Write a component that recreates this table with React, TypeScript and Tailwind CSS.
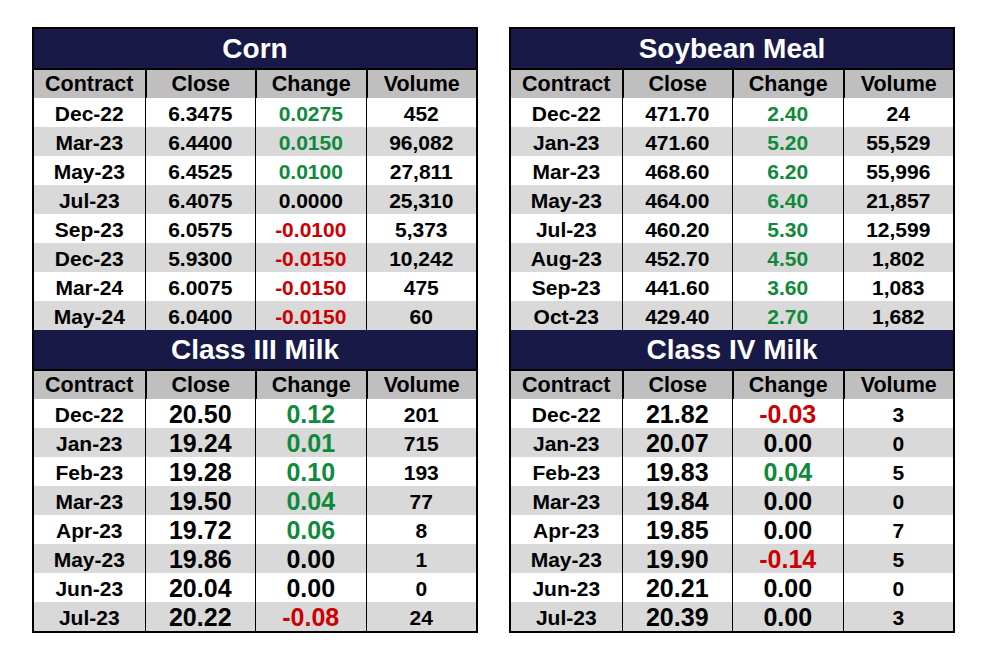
import React from 'react';

type Row = [string, string, string, string];

const GREEN = 'text-[#0f8a3c]';
const RED = 'text-[#cc0000]';

const corn: Row[] = [
  ['Dec-22', '6.3475', '0.0275', '452'],
  ['Mar-23', '6.4400', '0.0150', '96,082'],
  ['May-23', '6.4525', '0.0100', '27,811'],
  ['Jul-23', '6.4075', '0.0000', '25,310'],
  ['Sep-23', '6.0575', '-0.0100', '5,373'],
  ['Dec-23', '5.9300', '-0.0150', '10,242'],
  ['Mar-24', '6.0075', '-0.0150', '475'],
  ['May-24', '6.0400', '-0.0150', '60'],
];

const soyMeal: Row[] = [
  ['Dec-22', '471.70', '2.40', '24'],
  ['Jan-23', '471.60', '5.20', '55,529'],
  ['Mar-23', '468.60', '6.20', '55,996'],
  ['May-23', '464.00', '6.40', '21,857'],
  ['Jul-23', '460.20', '5.30', '12,599'],
  ['Aug-23', '452.70', '4.50', '1,802'],
  ['Sep-23', '441.60', '3.60', '1,083'],
  ['Oct-23', '429.40', '2.70', '1,682'],
];

const classIII: Row[] = [
  ['Dec-22', '20.50', '0.12', '201'],
  ['Jan-23', '19.24', '0.01', '715'],
  ['Feb-23', '19.28', '0.10', '193'],
  ['Mar-23', '19.50', '0.04', '77'],
  ['Apr-23', '19.72', '0.06', '8'],
  ['May-23', '19.86', '0.00', '1'],
  ['Jun-23', '20.04', '0.00', '0'],
  ['Jul-23', '20.22', '-0.08', '24'],
];

const classIV: Row[] = [
  ['Dec-22', '21.82', '-0.03', '3'],
  ['Jan-23', '20.07', '0.00', '0'],
  ['Feb-23', '19.83', '0.04', '5'],
  ['Mar-23', '19.84', '0.00', '0'],
  ['Apr-23', '19.85', '0.00', '7'],
  ['May-23', '19.90', '-0.14', '5'],
  ['Jun-23', '20.21', '0.00', '0'],
  ['Jul-23', '20.39', '0.00', '3'],
];

function changeColor(v: string) {
  const n = parseFloat(v);
  if (n > 0) return GREEN;
  if (n < 0) return RED;
  return 'text-black';
}

function Section({ title, rows, big }: { title: string; rows: Row[]; big?: boolean }) {
  const mid = big ? 'text-[25px]' : 'text-[21px]';
  return (
    <div>
      <div className="h-[41px] bg-[#191947] border-b-2 border-black flex items-center justify-center text-white text-[28px] font-bold leading-none pt-[1px]">
        {title}
      </div>
      <div className="grid grid-cols-4 h-[28px] bg-[#bfbfbf] text-[21.5px] font-bold leading-none text-black">
        {['Contract', 'Close', 'Change', 'Volume'].map((h, i) => (
          <div key={h} className={`flex items-center justify-center pt-[1px] ${i > 0 ? 'border-l-2 border-black' : ''}`}>
            {h}
          </div>
        ))}
      </div>
      {rows.map((r, idx) => (
        <div
          key={r[0]}
          className={`grid grid-cols-4 h-[29px] font-bold leading-none ${idx % 2 === 1 ? 'bg-[#d9d9d9]' : 'bg-white'}`}
        >
          <div className="flex items-center justify-center pt-[1px] text-[21px] text-black">{r[0]}</div>
          <div className={`flex items-center justify-center pt-[1px] border-l border-black ${mid} text-black`}>{r[1]}</div>
          <div className={`flex items-center justify-center pt-[1px] border-l border-black ${mid} ${changeColor(r[2])}`}>{r[2]}</div>
          <div className="flex items-center justify-center pt-[1px] border-l border-black text-[21px] text-black">{r[3]}</div>
        </div>
      ))}
    </div>
  );
}

export default function App() {
  return (
    <div className="w-[982px] h-[662px] bg-white font-['Liberation_Sans',Arial,sans-serif]">
      <div className="flex gap-[31px] pl-[32px] pt-[27px]">
        <div className="w-[446px] border-2 border-black">
          <Section title="Corn" rows={corn} />
          <Section title="Class III Milk" rows={classIII} big />
        </div>
        <div className="w-[446px] border-2 border-black">
          <Section title="Soybean Meal" rows={soyMeal} />
          <Section title="Class IV Milk" rows={classIV} big />
        </div>
      </div>
    </div>
  );
}
